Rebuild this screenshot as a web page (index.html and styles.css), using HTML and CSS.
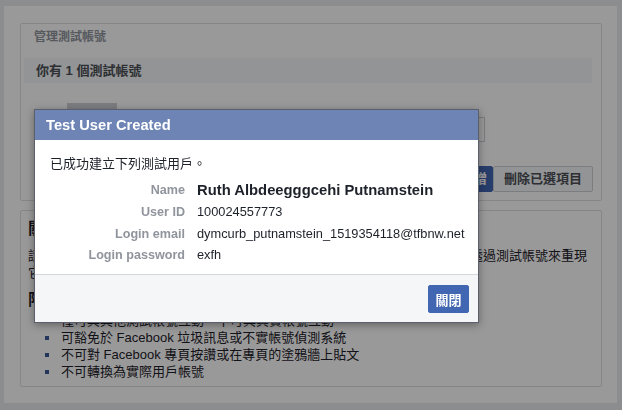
FILE: index.html
```html
<!DOCTYPE html>
<html lang="zh-Hant">
<head>
<meta charset="utf-8">
<title>測試帳號</title>
<link rel="stylesheet" href="styles.css">
</head>
<body>
<div class="page">
  <div class="content">
    <section class="panel manage">
      <div class="panel-title">管理測試帳號</div>
      <div class="strip">你有 1 個測試帳號</div>
      <div class="users">
        <div class="user-row">
          <div class="avatar"></div>
          <div class="search"></div>
        </div>
        <div class="actions">
          <button class="btn btn-blue">新增</button>
          <button class="btn btn-grey">刪除已選項目</button>
        </div>
      </div>
    </section>
    <section class="panel about">
      <h2 class="heading">關於測試帳號</h2>
      <p class="para">請使用測試帳號測試應用程式，不會影響真實用戶。若用戶回報錯誤，你可以透過測試帳號來重現它們，並確認修正是否有效。</p>
      <h2 class="heading heading-second">限制</h2>
      <ul class="limits">
        <li>僅可與其他測試帳號互動，不可與真實帳號互動</li>
        <li>可豁免於 Facebook 垃圾訊息或不實帳號偵測系統</li>
        <li>不可對 Facebook 專頁按讚或在專頁的塗鴉牆上貼文</li>
        <li>不可轉換為實際用戶帳號</li>
      </ul>
    </section>
  </div>
</div>
<div class="overlay"></div>
<div class="dialog">
  <div class="dialog-title">Test User Created</div>
  <div class="dialog-body">
    <div class="intro">已成功建立下列測試用戶。</div>
    <div class="info">
      <div class="label label-name">Name</div>
      <div class="value value-name">Ruth Albdeegggcehi Putnamstein</div>
      <div class="label">User ID</div>
      <div class="value">100024557773</div>
      <div class="label">Login email</div>
      <div class="value">dymcurb_putnamstein_1519354118@tfbnw.net</div>
      <div class="label">Login password</div>
      <div class="value">exfh</div>
    </div>
  </div>
  <div class="dialog-footer">
    <button class="close-btn">關閉</button>
  </div>
</div>
</body>
</html>
```

FILE: styles.css
```css
* { box-sizing: border-box; }

html, body {
  margin: 0;
  padding: 0;
  width: 622px;
  height: 410px;
  overflow: hidden;
}

body {
  font-family: "Liberation Sans", "Noto Sans CJK TC", sans-serif;
  color: #1d2129;
  background: #e9ebee;
}

.page {
  height: 410px;
  padding: 6px 5px 7px 4px;
  background: #e9ebee;
}

.content {
  height: 397px;
  background: #ffffff;
  padding: 17px 15px 16px 16px;
  display: flex;
  flex-direction: column;
  gap: 9px;
}

.panel {
  border: 1px solid #dddfe2;
  border-radius: 2px;
  background: #ffffff;
}

/* panel 1 */
.panel-title {
  padding: 5px 13px 12px 13px;
  font-size: 12px;
  font-weight: bold;
  line-height: 17px;
  color: #90949c;
}

.strip {
  margin: 0 9px 0 3px;
  height: 25px;
  line-height: 25px;
  padding-left: 12px;
  background: #f6f7f9;
  font-size: 13px;
  font-weight: bold;
  color: #4b4f56;
}

.users {
  padding: 20px 8px 8px 0;
}

.user-row {
  display: flex;
  align-items: flex-start;
  height: 50px;
}

.avatar {
  margin-left: 46px;
  width: 50px;
  height: 50px;
  background: #cdd0d5;
}

.search {
  margin-left: auto;
  margin-top: 14px;
  margin-right: 108px;
  width: 200px;
  height: 25px;
  border: 1px solid #ccd0d5;
  background: #ffffff;
}

.actions {
  margin-top: 13px;
  display: flex;
  justify-content: flex-end;
}

.btn {
  height: 26px;
  font-family: "Liberation Sans", "Noto Sans CJK TC", sans-serif;
  font-size: 13px;
  font-weight: bold;
  line-height: 24px;
  border-radius: 2px;
  display: flex;
  align-items: center;
}

.btn-blue {
  width: 100px;
  padding: 0 5px;
  justify-content: flex-end;
  background: #4267b2;
  border: 1px solid #4267b2;
  color: #ffffff;
}

.btn-grey {
  width: 100px;
  padding: 0;
  justify-content: center;
  background: #f6f7f9;
  border: 1px solid #ced0d4;
  color: #4b4f56;
}

/* panel 2 */
.about {
  flex: 1;
  padding: 8px 8px 0 7px;
}

.heading {
  margin: 0;
  font-size: 16px;
  font-weight: bold;
  line-height: 20px;
  color: #1d2129;
}

.heading-second {
  margin-top: 9px;
}

.para {
  margin: 8px 0 0;
  font-size: 13px;
  line-height: 17px;
  color: #1d2129;
}

.limits {
  list-style: none;
  margin: 2px 0 0;
  padding: 0;
  font-size: 13px;
  line-height: 17px;
}

.limits li {
  display: flex;
  align-items: center;
}

.limits li::before {
  content: "";
  display: inline-block;
  width: 4px;
  height: 4px;
  margin-left: 17px;
  margin-right: 12px;
  background: #3b5998;
}

/* overlay + dialog */
.overlay {
  position: fixed;
  top: 0;
  left: 0;
  right: 0;
  bottom: 0;
  background: rgba(0, 0, 0, 0.4);
}

.dialog {
  position: absolute;
  left: 34px;
  top: 109px;
  width: 445px;
  height: 214px;
  border: 1px solid #5a5f6b;
  background: #ffffff;
  box-shadow: 0 2px 8px rgba(0, 0, 0, 0.35);
}

.dialog-title {
  height: 30px;
  line-height: 30px;
  padding-left: 11px;
  background: #6d84b4;
  color: #ffffff;
  font-size: 14.7px;
  font-weight: bold;
}

.dialog-body {
  height: 134px;
  padding: 16px 10px 10px 15px;
}

.intro {
  font-size: 13px;
  line-height: 16px;
}

.info {
  margin-top: 5px;
  display: grid;
  grid-template-columns: 135px 1fr;
  grid-template-rows: 24px 22px 21px 21px;
  column-gap: 12px;
  align-items: center;
}

.label {
  text-align: right;
  color: #90949c;
  font-size: 12.6px;
  font-weight: bold;
  line-height: 16px;
  white-space: nowrap;
}

.value {
  font-size: 12.8px;
  line-height: 16px;
  white-space: nowrap;
}

.info .label-name,
.info .value-name {
  margin-top: 2px;
}

.value-name {
  font-size: 14.8px;
  font-weight: bold;
  line-height: 18px;
}

.dialog-footer {
  height: 48px;
  border-top: 1px solid #d3d6db;
  background: #f5f6f7;
  padding: 10px 9px 9px;
  display: flex;
  justify-content: flex-end;
}

.close-btn {
  width: 41px;
  height: 28px;
  padding: 0;
  border: 1px solid #4267b2;
  border-radius: 2px;
  background: #4267b2;
  color: #ffffff;
  font-family: "Liberation Sans", "Noto Sans CJK TC", sans-serif;
  font-size: 13px;
  font-weight: bold;
}
```
